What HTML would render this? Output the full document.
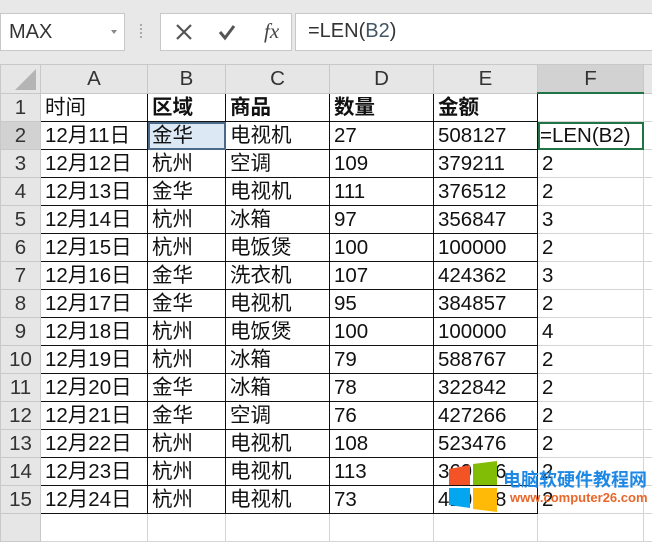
<!DOCTYPE html><html><head><meta charset="utf-8"><style>
body{margin:0;width:652px;height:518px;overflow:hidden;background:#fff;font-family:"Liberation Sans","Noto Sans CJK SC",sans-serif;position:relative}
.top{position:absolute;left:0;top:0;width:652px;height:64px;background:#e8e8e8}
.box{position:absolute;background:#fff;border:1px solid #c8c8c8}
table{position:absolute;left:0;top:64px;border-collapse:collapse;table-layout:fixed;width:662px}
td{height:27px;padding:0 0 0 4px;font-size:20.5px;color:#111;white-space:nowrap;overflow:hidden;border:1px solid #d4d4d4;line-height:27px}
tr.h td{background:#e6e6e6;text-align:center;color:#333;padding:0;border-color:#c8c8c8}
td.rh{background:#e6e6e6;text-align:center;padding:0;color:#333;border-color:#c8c8c8}
td.b{border:1px solid #111}
td.bold{font-weight:bold}
</style></head><body>
<div class="top"></div>
<div class="box" style="left:0;top:13px;width:123px;height:36px"><span style="position:absolute;left:8px;top:7px;font-size:20px;color:#333">MAX</span><span style="position:absolute;left:110px;top:16px;border:3px solid transparent;border-top:4px solid #888"></span></div>
<div style="position:absolute;left:140px;top:24px;width:2px;height:14px;border-left:2px dotted #aaa"></div>
<div class="box" style="left:160px;top:13px;width:130px;height:36px">
<svg width="130" height="36" style="position:absolute;left:0;top:0"><path d="M16 11l14 14M30 11L16 25" stroke="#555" stroke-width="2.2"/><path d="M59 18l5 6 9-12" stroke="#555" stroke-width="3" fill="none"/></svg>
<span style="position:absolute;left:103px;top:5px;font:italic 21px 'Liberation Serif',serif;color:#444">fx</span>
</div>
<div class="box" style="left:295px;top:13px;width:360px;height:36px"></div>
<span style="position:absolute;left:308px;top:20px;font-size:20px;color:#333">=LEN(<span style="color:#456">B2</span>)</span>
<table>
<colgroup><col style="width:40px"><col style="width:107px"><col style="width:78px"><col style="width:104px"><col style="width:104px"><col style="width:104px"><col style="width:106px"><col style="width:19px"></colgroup>
<tr class="h"><td style="background:#e6e6e6"><svg width="36" height="26" style="display:block;margin-left:2px"><path d="M33 3V24H12Z" fill="#b4b4b4"/></svg></td><td>A</td><td>B</td><td>C</td><td>D</td><td>E</td><td style="background:#d2d2d2;border-bottom:2px solid #217346">F</td><td></td></tr>
<tr><td class="rh">1</td><td class="b">时间</td><td class="b bold">区域</td><td class="b bold">商品</td><td class="b bold">数量</td><td class="b bold">金额</td><td></td><td></td></tr>
<tr><td class="rh" style="background:#d2d2d2">2</td><td class="b">12月11日</td><td class="b" style="background:#dde8f5;outline:2px solid #4a6a8a;outline-offset:-2px">金华</td><td class="b">电视机</td><td class="b">27</td><td class="b">508127</td><td style="outline:2px solid #217346;outline-offset:-2px;padding-left:2px">=LEN(B2)</td><td></td></tr>
<tr><td class="rh">3</td><td class="b">12月12日</td><td class="b">杭州</td><td class="b">空调</td><td class="b">109</td><td class="b">379211</td><td>2</td><td></td></tr>
<tr><td class="rh">4</td><td class="b">12月13日</td><td class="b">金华</td><td class="b">电视机</td><td class="b">111</td><td class="b">376512</td><td>2</td><td></td></tr>
<tr><td class="rh">5</td><td class="b">12月14日</td><td class="b">杭州</td><td class="b">冰箱</td><td class="b">97</td><td class="b">356847</td><td>3</td><td></td></tr>
<tr><td class="rh">6</td><td class="b">12月15日</td><td class="b">杭州</td><td class="b">电饭煲</td><td class="b">100</td><td class="b">100000</td><td>2</td><td></td></tr>
<tr><td class="rh">7</td><td class="b">12月16日</td><td class="b">金华</td><td class="b">洗衣机</td><td class="b">107</td><td class="b">424362</td><td>3</td><td></td></tr>
<tr><td class="rh">8</td><td class="b">12月17日</td><td class="b">金华</td><td class="b">电视机</td><td class="b">95</td><td class="b">384857</td><td>2</td><td></td></tr>
<tr><td class="rh">9</td><td class="b">12月18日</td><td class="b">杭州</td><td class="b">电饭煲</td><td class="b">100</td><td class="b">100000</td><td>4</td><td></td></tr>
<tr><td class="rh">10</td><td class="b">12月19日</td><td class="b">杭州</td><td class="b">冰箱</td><td class="b">79</td><td class="b">588767</td><td>2</td><td></td></tr>
<tr><td class="rh">11</td><td class="b">12月20日</td><td class="b">金华</td><td class="b">冰箱</td><td class="b">78</td><td class="b">322842</td><td>2</td><td></td></tr>
<tr><td class="rh">12</td><td class="b">12月21日</td><td class="b">金华</td><td class="b">空调</td><td class="b">76</td><td class="b">427266</td><td>2</td><td></td></tr>
<tr><td class="rh">13</td><td class="b">12月22日</td><td class="b">杭州</td><td class="b">电视机</td><td class="b">108</td><td class="b">523476</td><td>2</td><td></td></tr>
<tr><td class="rh">14</td><td class="b">12月23日</td><td class="b">杭州</td><td class="b">电视机</td><td class="b">113</td><td class="b">369856</td><td>2</td><td></td></tr>
<tr><td class="rh">15</td><td class="b">12月24日</td><td class="b">杭州</td><td class="b">电视机</td><td class="b">73</td><td class="b">410568</td><td>2</td><td></td></tr>
<tr><td class="rh"></td><td></td><td></td><td></td><td></td><td></td><td></td><td></td></tr>
</table>
<svg width="54" height="52" style="position:absolute;left:447px;top:461px"><path d="M2 8L23 4V24H2Z" fill="#f35325"/><path d="M26 3L50 0V24H26Z" fill="#81bc06"/><path d="M2 27H23V47L2 44Z" fill="#05a6f0"/><path d="M26 27H50V51L26 48Z" fill="#ffba08"/></svg>
<span style="position:absolute;left:503px;top:466px;font-size:18px;font-weight:bold;color:#1e88e5">电脑软硬件教程网</span>
<span style="position:absolute;left:510px;top:490px;font-size:13px;font-weight:bold;color:#e8672a">www.computer26.com</span>
</body></html>
